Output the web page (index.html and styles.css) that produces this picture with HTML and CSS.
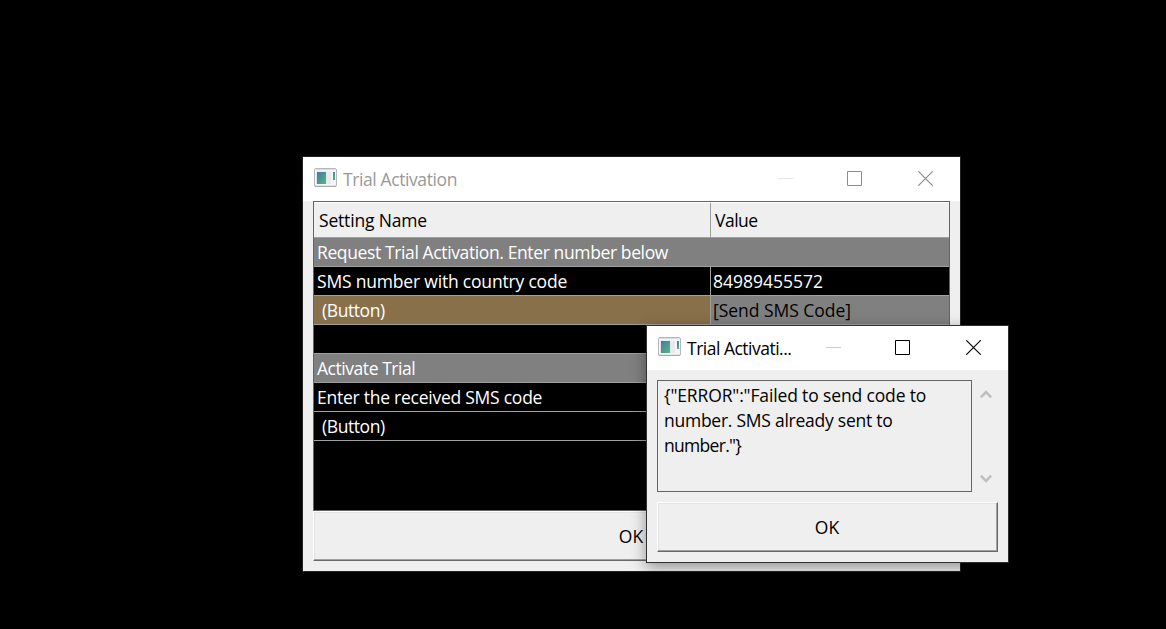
FILE: index.html
```html
<!DOCTYPE html>
<html lang="en">
<head>
<meta charset="utf-8">
<title>Trial Activation</title>
<link rel="stylesheet" href="styles.css">
</head>
<body>
<svg class="defs" width="0" height="0" aria-hidden="true">
  <defs>
    <linearGradient id="pane" x1="0" y1="0" x2="1" y2="1"><stop offset="0" stop-color="#4479a0"/><stop offset="1" stop-color="#5ab584"/></linearGradient>
    <symbol id="app" viewBox="0 0 23 19">
      <rect x=".5" y=".5" width="22" height="18" rx="1.5" fill="#f4f5f7" stroke="#b4b9c0"/>
      <path d="M1.5 1.5h20" stroke="#d3dbe4"/>
      <path d="M.8 18.3h21.4" stroke="#a4a6a8"/>
      <rect x="2.500" y="3.500" width="10" height="12.500" fill="#d5dde2"/>
      <rect x="3" y="4" width="9" height="12" fill="url(#pane)"/>
      <rect x="13" y="4" width="4" height="12" fill="#e8eaee"/>
      <rect x="19" y="4" width="2" height="8" fill="url(#pane)"/>
    </symbol>
    <symbol id="max" viewBox="0 0 15 15"><path d="M.5.5h14v14H.5z" fill="none" stroke="currentColor"/></symbol>
    <symbol id="close" viewBox="0 0 15 15"><path d="M.3.3l14.4 14.4M14.7.3L.3 14.7" fill="none" stroke="currentColor" stroke-width="1.15"/></symbol>
  </defs>
</svg>
<main class="desktop">
  <section class="window window-main">
    <header class="titlebar inactive">
      <svg class="app-icon"><use href="#app"/></svg>
      <h1 class="title">Trial Activation</h1>
      <div class="controls">
        <span class="minimize"></span>
        <svg class="control"><use href="#max"/></svg>
        <svg class="control"><use href="#close"/></svg>
      </div>
    </header>
    <div class="body">
      <div class="grid">
        <div class="row head"><span class="name"><b class="t-setting">Setting Name</b></span><span class="value"><b class="t-value">Value</b></span></div>
        <div class="row group"><b class="t-request">Request Trial Activation. Enter number below</b></div>
        <div class="row"><span class="name"><b class="t-sms">SMS number with country code</b></span><span class="value"><b class="t-number">84989455572</b></span></div>
        <div class="row"><span class="name selected indent"><b class="t-button">(Button)</b></span><span class="value action"><b class="t-send">[Send SMS Code]</b></span></div>
        <div class="row"></div>
        <div class="row group"><b class="t-activate">Activate Trial</b></div>
        <div class="row"><b class="t-enter">Enter the received SMS code</b></div>
        <div class="row indent"><b class="t-button">(Button)</b></div>
      </div>
      <button class="ok">OK</button>
    </div>
  </section>
  <section class="window window-dialog">
    <header class="titlebar">
      <svg class="app-icon"><use href="#app"/></svg>
      <h2 class="title">Trial Activati...</h2>
      <div class="controls">
        <span class="minimize"></span>
        <svg class="control"><use href="#max"/></svg>
        <svg class="control"><use href="#close"/></svg>
      </div>
    </header>
    <div class="body dialog-body">
      <div class="message-area">
        <div class="message"><b class="t-line1">{"ERROR":"Failed to send code to</b><b class="t-line2">number. SMS already sent to</b><b class="t-line3">number."}</b></div>
        <div class="scroll">
          <svg class="arrow" viewBox="0 0 12 10"><path d="M.8 8.3L6 3l5.200 5.300" fill="none" stroke="#bfbfbf" stroke-width="2.600"/></svg>
          <svg class="arrow" viewBox="0 0 12 10"><path d="M.8 1.700L6 7l5.200-5.300" fill="none" stroke="#bfbfbf" stroke-width="2.600"/></svg>
        </div>
      </div>
      <button class="ok">OK</button>
    </div>
  </section>
</main>
</body>
</html>
```
FILE: styles.css
```css
* { box-sizing: border-box; }
body { margin: 0; background: #000; font-family: "Open Sans", "Noto Sans", sans-serif; font-size: 17.5px; color: #000; }
b { font-weight: 400; white-space: pre; }
.defs { position: absolute; }
.desktop { position: relative; width: 1166px; height: 629px; overflow: hidden; background: #000; }
.window { position: absolute; display: flex; flex-direction: column; background: #efefef; }
.window-main { left: 303px; top: 157px; width: 657px; height: 414px; box-shadow: 0 0 0 1px #242424; }
.window-dialog { left: 647px; top: 326px; width: 361px; height: 236px; box-shadow: 0 0 0 1px #303030, 0 4px 14px 1px rgba(0, 0, 0, .4); }
.titlebar { display: flex; height: 44px; padding: 11px 27px 0 11px; background: #fff; }
.app-icon { width: 23px; height: 19px; flex: none; }
.title { margin: 0 0 0 6px; font-size: 17.5px; font-weight: 400; line-height: 22px; letter-spacing: -.5px; white-space: nowrap; }
.inactive .title { color: #999; letter-spacing: -.4px; }
.controls { display: flex; margin: 3px 0 0 auto; color: #000; }
.minimize { width: 15px; height: 1px; margin-top: 7px; background: #ccc; }
.control { width: 15px; height: 15px; margin-left: 56px; }
.minimize + .control { margin-left: 54px; }
.inactive .controls { color: #8c8c8c; }
.inactive .minimize { background: #e7e7e7; }
.body { padding: 0 10px 10px; }
.grid { height: 310px; border: 1px solid #646464; background: #000; color: #fff; }
.row { display: flex; height: 29px; padding-left: 3px; border-bottom: 1px solid #a0a0a0; line-height: 28px; }
.row:has(.name) { padding-left: 0; }
.name { width: 397px; padding-left: 3px; border-right: 1px solid #a0a0a0; }
.value { flex: 1; padding-left: 2px; }
.head { height: 36px; line-height: 35px; background: #efefef; color: #000; border-top: 1px solid #fff; border-bottom-color: #a0a0a0; }
.head .name { padding-left: 5px; }
.head .value { padding-left: 4px; }
.group { background: #808080; }
.selected { background: #88704a; }
.action { background: #808080; color: #000; }
.indent, .name.indent { padding-left: 8px; }
.t-setting { letter-spacing: -.18px; }
.t-value { letter-spacing: -.5px; }
.t-request { letter-spacing: -.38px; }
.t-sms { letter-spacing: -.19px; }
.t-button { letter-spacing: -.42px; }
.t-send { letter-spacing: -.03px; }
.t-activate { letter-spacing: -.45px; }
.t-enter { letter-spacing: -.25px; }
.t-line1 { letter-spacing: -.14px; }
.t-line2 { letter-spacing: -.25px; }
.t-line3 { letter-spacing: -.7px; }
.ok { display: block; width: 100%; height: 50px; padding: 0 1px 0 0; border: 1px solid; border-color: #fff #696969 #696969 #fff; border-radius: 0; background: #efefef; box-shadow: inset -1px -1px #a0a0a0, inset 1px 1px #e3e3e3; font: inherit; color: #000; }
.dialog-body { display: flex; flex-direction: column; gap: 10px; padding-top: 10px; }
.message-area { display: flex; height: 112px; }
.message { display: flex; flex-direction: column; width: 315px; padding: 2px 6px; border: 1px solid #646464; line-height: 25px; }
.scroll { display: flex; flex: 1; flex-direction: column; justify-content: space-between; padding: 9px 0 8px 7.5px; }
.arrow { width: 12px; height: 10px; }
```
